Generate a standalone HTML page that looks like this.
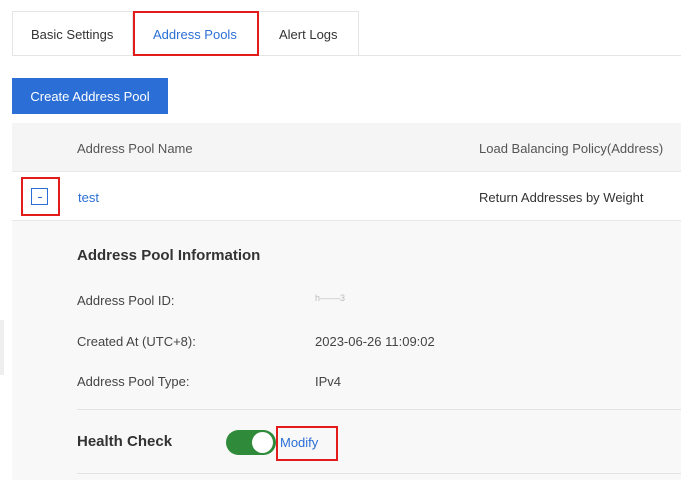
<html><head><style>
body{margin:0;width:681px;height:479px;background:#fff;font-family:"Liberation Sans",sans-serif;position:relative;overflow:hidden;font-size:13px;color:#333}
.a{position:absolute}
</style></head><body>
<div class="a" style="left:12px;top:11px;width:345px;height:44px;border:1px solid #e5e5e5;border-bottom:none"></div>
<div class="a" style="left:12px;top:55px;width:669px;height:1px;background:#e5e5e5"></div>
<div class="a" style="left:132px;top:11px;width:1px;height:44px;background:#e5e5e5"></div>
<div class="a" style="left:257px;top:11px;width:1px;height:44px;background:#e5e5e5"></div>
<div class="a" style="left:31px;top:27px;color:#333">Basic Settings</div>
<div class="a" style="left:153px;top:27px;color:#2b6fd6">Address Pools</div>
<div class="a" style="left:279px;top:27px;color:#333">Alert Logs</div>
<div class="a" style="left:133px;top:11px;width:122px;height:41px;border:2px solid #e31b1b"></div>
<div class="a" style="left:12px;top:78px;width:156px;height:36px;background:#2b6fd6;color:#fff;line-height:38px;text-align:center;font-size:13px">Create Address Pool</div>
<div class="a" style="left:12px;top:123px;width:669px;height:48px;background:#f5f5f5;border-bottom:1px solid #e8e8e8"></div>
<div class="a" style="left:77px;top:141px;color:#555">Address Pool Name</div>
<div class="a" style="left:479px;top:141px;color:#555">Load Balancing Policy(Address)</div>
<div class="a" style="left:12px;top:220px;width:669px;height:259px;background:#f8f8f8;border-top:1px solid #e8e8e8"></div>
<div class="a" style="left:31px;top:188px;width:17px;height:17px;border:1px solid #2b6fd6;box-sizing:border-box"><div class="a" style="left:6px;top:8px;width:4px;height:1px;background:#2b6fd6"></div></div>
<div class="a" style="left:21px;top:177px;width:39px;height:39px;border:2px solid #e31b1b;box-sizing:border-box"></div>
<div class="a" style="left:78px;top:190px;color:#2b6fd6">test</div>
<div class="a" style="left:479px;top:190px;color:#333">Return Addresses by Weight</div>
<div class="a" style="left:77px;top:247px;font-weight:bold;font-size:15px;color:#333">Address Pool Information</div>
<div class="a" style="left:77px;top:293px;color:#444">Address Pool ID:</div>
<div class="a" style="left:315px;top:293px;color:#bbb;font-size:9px">h&#x2012;&#x2012;&#x2012;&#x2012;3</div>
<div class="a" style="left:77px;top:334px;color:#444">Created At (UTC+8):</div>
<div class="a" style="left:315px;top:334px;color:#444">2023-06-26 11:09:02</div>
<div class="a" style="left:77px;top:374px;color:#444">Address Pool Type:</div>
<div class="a" style="left:315px;top:374px;color:#444">IPv4</div>
<div class="a" style="left:77px;top:409px;width:604px;height:1px;background:#e3e3e3"></div>
<div class="a" style="left:77px;top:473px;width:604px;height:1px;background:#e3e3e3"></div>
<div class="a" style="left:77px;top:433px;font-weight:bold;font-size:15px;color:#333">Health Check</div>
<div class="a" style="left:226px;top:430px;width:50px;height:25px;border-radius:13px;background:#2f8a3a"></div>
<div class="a" style="left:252px;top:432px;width:21px;height:21px;border-radius:50%;background:#fff"></div>
<div class="a" style="left:280px;top:435px;color:#2b6fd6">Modify</div>
<div class="a" style="left:276px;top:426px;width:62px;height:35px;border:2px solid #e31b1b;box-sizing:border-box"></div>
<div class="a" style="left:0;top:320px;width:4px;height:55px;background:#eee"></div>
</body></html>
